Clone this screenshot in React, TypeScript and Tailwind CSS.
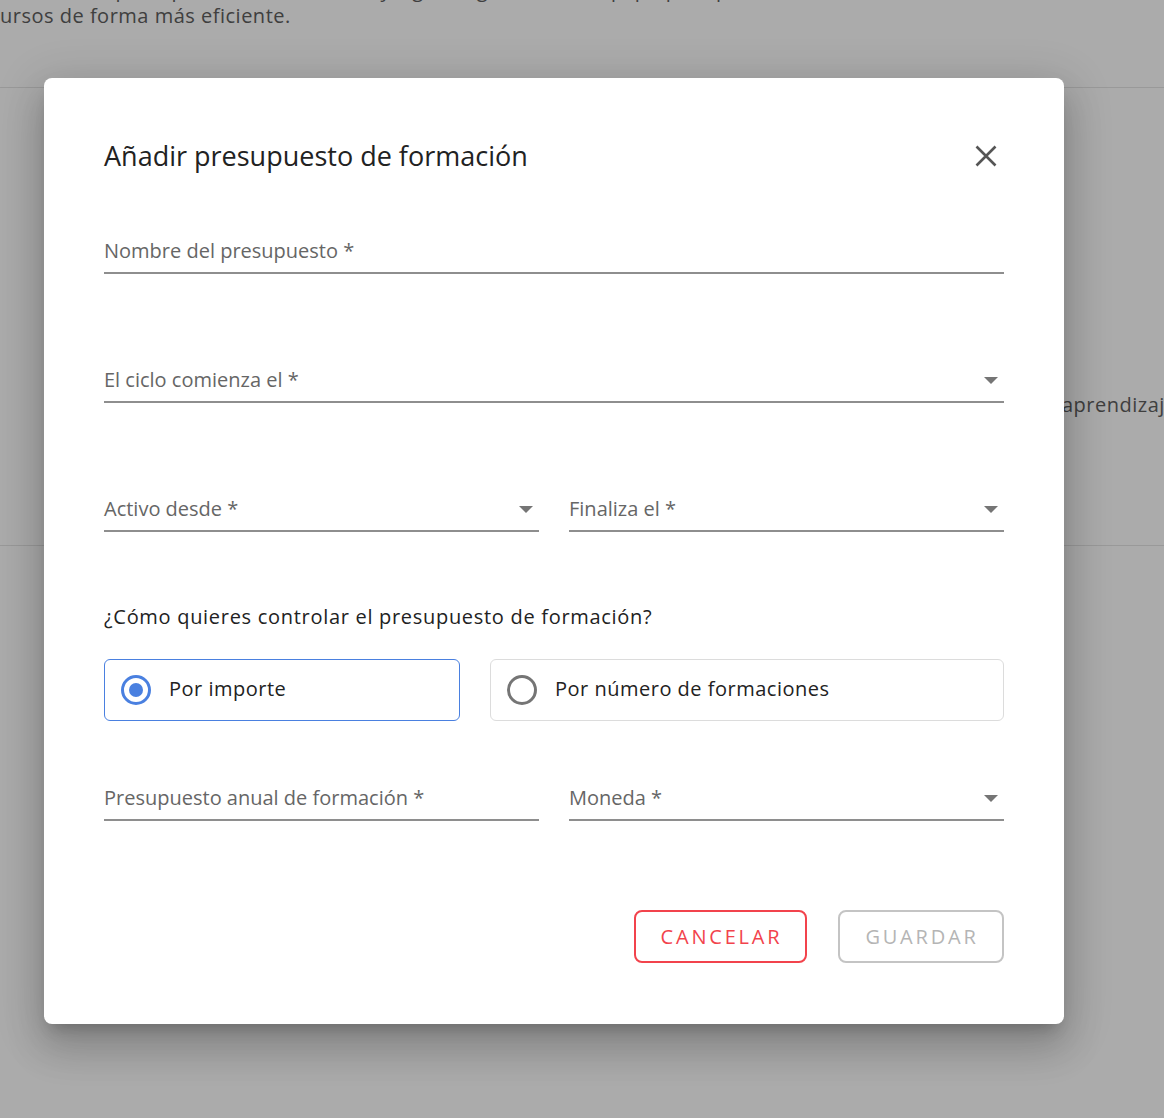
import React from "react";

const font = { fontFamily: '"Open Sans", "Noto Sans", sans-serif' };

function Arrow() {
  return (
    <svg width="14" height="7" viewBox="0 0 14 7" className="shrink-0">
      <path d="M0 0 L14 0 L7 7 Z" fill="#757575" />
    </svg>
  );
}

function Field({ label, select }: { label: string; select?: boolean }) {
  return (
    <div className="flex items-center justify-between border-b-2 border-[#8e8e8e] pb-[7px] pr-[6px]">
      <span className="text-[20px] leading-[28px] text-[#666666]">{label}</span>
      {select && <Arrow />}
    </div>
  );
}

export default function App() {
  return (
    <div className="relative h-[1118px] w-full overflow-hidden bg-white" style={font}>
      {/* background page */}
      <div className="flex flex-col text-[20px] leading-[26px] tracking-[0.5px] text-[#5e5e5e]">
        <p className="-mt-[23px] whitespace-nowrap">
          Gestiona el presupuesto de formación y sigue el gasto de tu equipo para planificar
        </p>
        <p className="whitespace-nowrap">ursos de forma más eficiente.</p>
        <div className="mt-[58px] h-px w-full bg-[#e4e4e4]" />
        <div className="mt-[304px] flex pl-[1062px]">
          <span className="whitespace-nowrap">aprendizaje</span>
        </div>
        <div className="mt-[127px] h-px w-full bg-[#e4e4e4]" />
      </div>

      {/* overlay */}
      <div className="absolute inset-0 bg-[rgba(0,0,0,0.33)]" />

      {/* modal */}
      <div className="absolute left-[44px] top-[78px] h-[946px] w-[1020px] rounded-[8px] bg-white px-[60px] pt-[60px] shadow-[0_11px_15px_-7px_rgba(0,0,0,0.2),0_24px_38px_3px_rgba(0,0,0,0.14),0_9px_46px_8px_rgba(0,0,0,0.12)]">
        <div className="flex h-[36px] items-center justify-between">
          <h2 className="text-[27px] leading-[36px] text-[#222222]">Añadir presupuesto de formación</h2>
          <svg width="22" height="22" viewBox="0 0 22 22" className="mr-[7px]">
            <path d="M1.5 1.5 L20.5 20.5 M20.5 1.5 L1.5 20.5" stroke="#555555" strokeWidth="2.6" strokeLinecap="butt" />
          </svg>
        </div>

        <div className="mt-[63px]">
          <Field label="Nombre del presupuesto *" />
        </div>

        <div className="mt-[92px]">
          <Field label="El ciclo comienza el *" select />
        </div>

        <div className="mt-[92px] grid grid-cols-2 gap-[30px]">
          <Field label="Activo desde *" select />
          <Field label="Finaliza el *" select />
        </div>

        <p className="mt-[71px] text-[20px] leading-[28px] tracking-[0.7px] text-[#222222]">
          ¿Cómo quieres controlar el presupuesto de formación?
        </p>

        <div className="mt-[28px] flex gap-[30px]">
          <div className="flex h-[62px] w-[356px] items-center gap-[18px] rounded-[6px] border border-[#4a80e0] pl-[16px]">
            <span className="flex h-[30px] w-[30px] items-center justify-center rounded-full border-[3px] border-[#4a80e0]">
              <span className="h-[14px] w-[14px] rounded-full bg-[#4a80e0]" />
            </span>
            <span className="-mt-[3px] text-[20px] leading-[28px] tracking-[0.5px] text-[#222222]">Por importe</span>
          </div>
          <div className="flex h-[62px] flex-1 items-center gap-[18px] rounded-[6px] border border-[#dcdcdc] pl-[16px]">
            <span className="h-[30px] w-[30px] rounded-full border-[3px] border-[#757575]" />
            <span className="-mt-[3px] text-[20px] leading-[28px] tracking-[0.5px] text-[#222222]">Por número de formaciones</span>
          </div>
        </div>

        <div className="mt-[63px] grid grid-cols-2 gap-[30px]">
          <Field label="Presupuesto anual de formación *" />
          <Field label="Moneda *" select />
        </div>

        <div className="mt-[89px] flex justify-end gap-[31px]">
          <button className="flex h-[53px] w-[173px] items-center justify-center rounded-[8px] border-2 border-[#f2434c] pl-[2px] text-[20px] tracking-[2.8px] text-[#f2434c]">
            CANCELAR
          </button>
          <button className="flex h-[53px] w-[166px] items-center justify-center rounded-[8px] border-2 border-[#c4c4c4] pl-[2px] text-[20px] tracking-[2.8px] text-[#b5b5b5]">
            GUARDAR
          </button>
        </div>
      </div>
    </div>
  );
}
